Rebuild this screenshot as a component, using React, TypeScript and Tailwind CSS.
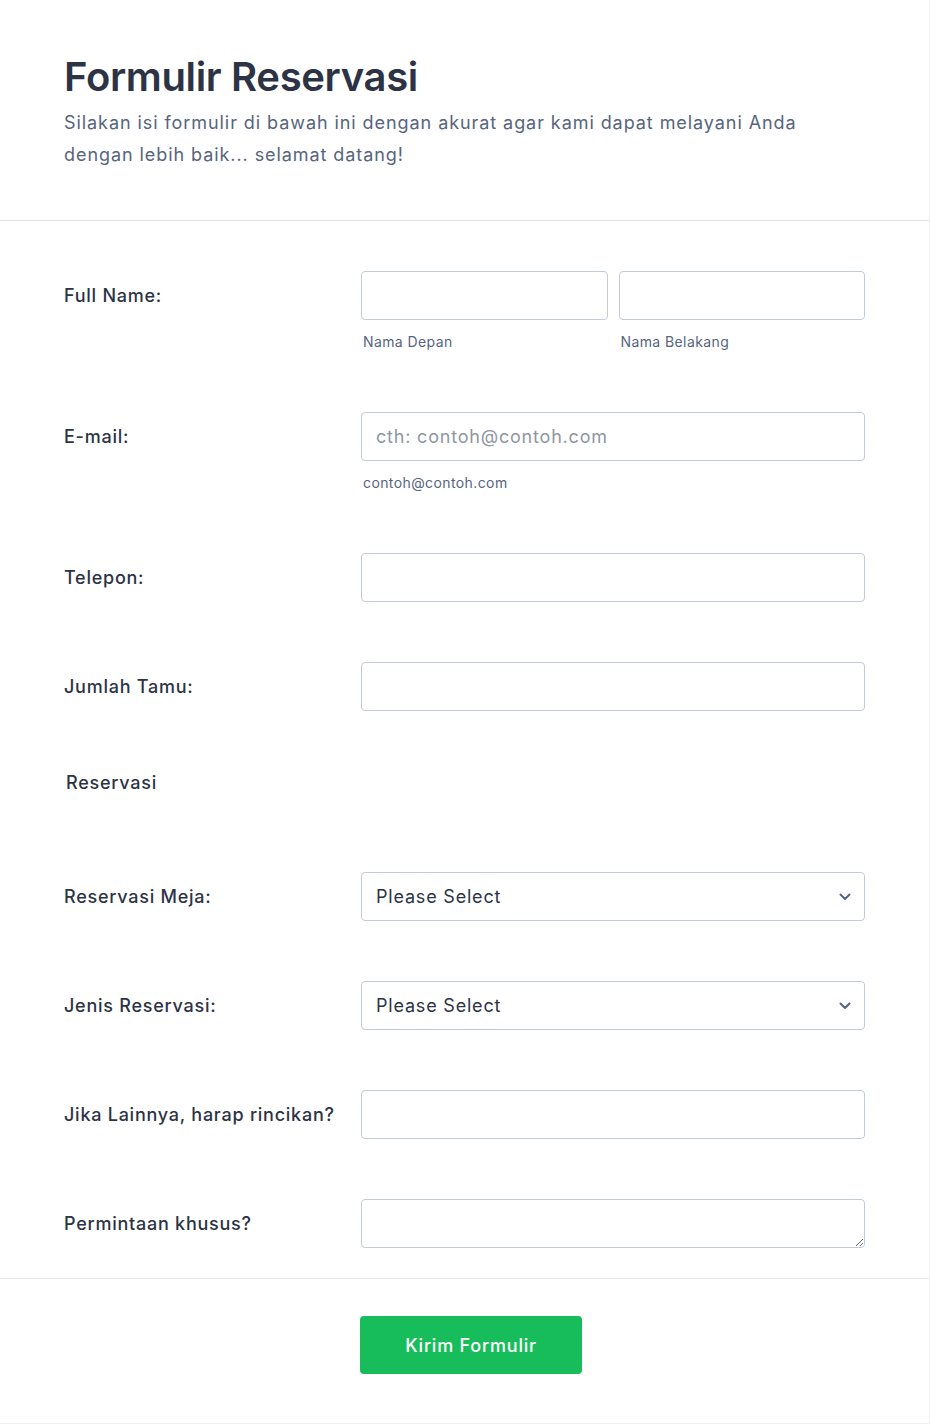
import { ReactNode } from "react";

const labelCls = "w-[297px] shrink-0 text-[18px] font-medium leading-6 tracking-[0.75px] text-[#2c3345]";
const inputCls =
  "h-[49px] w-full rounded border border-[#c3cad8] bg-white px-[14px] text-[18px] tracking-[0.8px] text-[#2c3345] outline-none placeholder:text-[#8f96a3]";
const subCls = "mt-3 text-[14px] leading-5 tracking-[0.4px] text-[#57647e]";

function Row({ label, children }: { label: string; children: ReactNode }) {
  return (
    <div className="flex items-center py-[30px]">
      <label className={labelCls}>{label}</label>
      <div className="w-[504px]">{children}</div>
    </div>
  );
}

function Select() {
  return (
    <div className="relative">
      <select className={`${inputCls} appearance-none`} defaultValue="">
        <option value="">Please Select</option>
      </select>
      <svg
        className="pointer-events-none absolute right-[14px] top-1/2 -translate-y-1/2"
        width="12"
        height="8"
        viewBox="0 0 12 8"
        fill="none"
      >
        <path d="M1.5 1.5 6 6l4.5-4.5" stroke="#57647e" strokeWidth="2" strokeLinecap="round" strokeLinejoin="round" />
      </svg>
    </div>
  );
}

export default function App() {
  return (
    <div className="min-h-[1425px] bg-white" style={{ fontFamily: "Inter, 'Noto Sans', sans-serif" }}>
      <div className="w-[930px] border-b border-r border-[#eef0f6] bg-white">
        <header className="border-b border-[#dfe3ec] px-16 pb-[49px] pt-[54px]">
          <h1 className="text-[40px] font-semibold leading-[46px] tracking-[-0.35px] text-[#2c3345]">
            Formulir Reservasi
          </h1>
          <p className="mt-[7px] max-w-[780px] text-[18px] leading-8 tracking-[0.93px] text-[#57647e]">
            Silakan isi formulir di bawah ini dengan akurat agar kami dapat melayani Anda dengan lebih baik... selamat datang!
          </p>
        </header>

        <form className="border-b border-[#e6e9f0] px-16 pt-5">
          <div className="flex items-start py-[30px]">
            <label className={`${labelCls} pt-[13px]`}>Full Name:</label>
            <div className="flex w-[504px] gap-[11px]">
              <div className="flex-1">
                <input className={inputCls} />
                <div className={`${subCls} pl-[2px]`}>Nama Depan</div>
              </div>
              <div className="flex-1">
                <input className={inputCls} />
                <div className={`${subCls} pl-[2px]`}>Nama Belakang</div>
              </div>
            </div>
          </div>

          <div className="flex items-start py-[30px]">
            <label className={`${labelCls} pt-[13px]`}>E-mail:</label>
            <div className="w-[504px]">
              <input className={inputCls} placeholder="cth: contoh@contoh.com" />
              <div className={`${subCls} pl-[2px] text-[#414a5c]`}>contoh@contoh.com</div>
            </div>
          </div>

          <Row label="Telepon:">
            <input className={inputCls} />
          </Row>

          <Row label="Jumlah Tamu:">
            <input className={inputCls} />
          </Row>

          <div className="pb-[47px] pl-[2px] pt-[30px] text-[18px] font-medium leading-6 tracking-[0.75px] text-[#2c3345]">
            Reservasi
          </div>

          <Row label="Reservasi Meja:">
            <Select />
          </Row>

          <Row label="Jenis Reservasi:">
            <Select />
          </Row>

          <Row label="Jika Lainnya, harap rincikan?">
            <input className={inputCls} />
          </Row>

          <Row label="Permintaan khusus?">
            <textarea className={`${inputCls} block resize-y py-2`} rows={1} />
          </Row>
        </form>

        <div className="flex justify-center pb-[49px] pl-[13px] pt-[37px]">
          <button
            type="button"
            className="h-[58px] w-[222px] rounded bg-[#18bd5b] text-[18px] font-medium tracking-[0.8px] text-white"
          >
            Kirim Formulir
          </button>
        </div>
      </div>
    </div>
  );
}
